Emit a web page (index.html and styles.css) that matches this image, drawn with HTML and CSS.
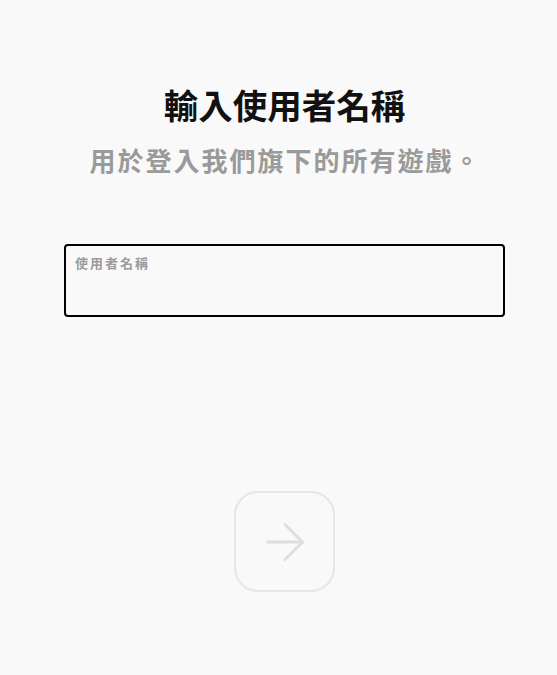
FILE: index.html
```html
<!DOCTYPE html>
<html lang="zh-Hant">
<head>
    <meta charset="UTF-8">
    <meta name="viewport" content="width=device-width, initial-scale=1.0">
    <title>輸入使用者名稱</title>
    <link rel="stylesheet" href="styles.css">
</head>
<body>

<div class="container">
    <h1 class="title">輸入使用者名稱</h1>
    <p class="subtitle">用於登入我們旗下的所有遊戲。</p>

    <label class="field">
        <span class="field-label">使用者名稱</span>
        <input class="field-input" type="text">
    </label>

    <div class="actions">
        <button class="next-btn" disabled>
            <svg width="60" height="60" viewBox="0 0 24 24" fill="none" stroke="currentColor" stroke-width="1.2" stroke-linecap="round" stroke-linejoin="round">
                <path d="M5 12h14"/>
                <path d="M12 5l7 7-7 7"/>
            </svg>
        </button>
    </div>
</div>

</body>
</html>
```

FILE: styles.css
```css
body {
    font-family: "Noto Sans CJK TC", "Noto Sans", sans-serif;
    background-color: #f9f9f9;
    color: #111;
    margin: 0;
}
.container {
    width: 441px;
    margin-left: 64px;
    padding-top: 80px;
    display: flex;
    flex-direction: column;
    align-items: center;
}
.title {
    font-size: 34.5px;
    font-weight: 700;
    line-height: 48px;
    margin: 0;
}
.subtitle {
    font-size: 26px;
    font-weight: 700;
    line-height: 40px;
    letter-spacing: 2px;
    color: #9a9a9a;
    margin: 12px 0 0 2px;
}
.field {
    align-self: stretch;
    box-sizing: border-box;
    height: 73px;
    margin-top: 64px;
    border: 2px solid #000;
    border-radius: 4px;
    padding: 8px 9px;
    display: flex;
    flex-direction: column;
}
.field-label {
    font-size: 13px;
    font-weight: 700;
    line-height: 18px;
    color: #9a9a9a;
    letter-spacing: 2px;
}
.field-input {
    border: none;
    background: transparent;
    outline: none;
    font-size: 18px;
    padding: 0;
    font-family: inherit;
}
.actions {
    margin-top: 174px;
}
.next-btn {
    width: 101px;
    height: 101px;
    border: 2px solid #e6e6e6;
    border-radius: 24px;
    background: transparent;
    color: #dedede;
    display: flex;
    align-items: center;
    justify-content: center;
    padding: 0;
}
```
